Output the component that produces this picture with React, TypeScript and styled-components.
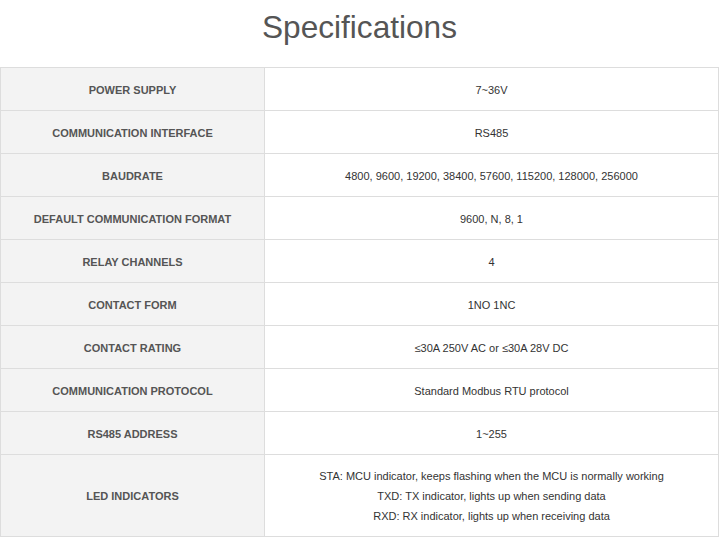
import React from "react";
import styled, { createGlobalStyle } from "styled-components";

const Global = createGlobalStyle`
  html, body { margin: 0; padding: 0; background: #fff; }
  body { font-family: "Liberation Sans", Arial, sans-serif; }
`;

const Page = styled.div`
  width: 719px;
`;

const Title = styled.h2`
  margin: 0;
  padding-top: 9px;
  height: 67px;
  box-sizing: border-box;
  font-size: 31.6px;
  line-height: 36px;
  font-weight: 400;
  color: #555;
  text-align: center;
`;

const Table = styled.table`
  width: 719px;
  border-collapse: collapse;
  table-layout: fixed;
`;

const Label = styled.th<{ $multi?: boolean }>`
  width: 264px;
  box-sizing: border-box;
  background: #f3f3f3;
  border: 1px solid #ddd;
  padding: ${(p) => (p.$multi ? "10px 8px" : "12px 8px 10px")};
  font-size: 11px;
  font-weight: 700;
  color: #555;
  text-transform: uppercase;
  text-align: center;
  vertical-align: middle;
`;

const Value = styled.td<{ $multi?: boolean }>`
  border: 1px solid #ddd;
  padding: ${(p) => (p.$multi ? "11px 8px 10px" : "12px 8px 10px")};
  font-size: 11px;
  color: #333;
  text-align: center;
  vertical-align: middle;
`;

const Line = styled.div`
  height: 20px;
  line-height: 20px;
  overflow: hidden;
  white-space: nowrap;
`;

const rows: [string, string[]][] = [
  ["Power Supply", ["7~36V"]],
  ["Communication Interface", ["RS485"]],
  ["Baudrate", ["4800, 9600, 19200, 38400, 57600, 115200, 128000, 256000"]],
  ["Default Communication Format", ["9600, N, 8, 1"]],
  ["Relay Channels", ["4"]],
  ["Contact Form", ["1NO 1NC"]],
  ["Contact Rating", ["≤30A 250V AC or ≤30A 28V DC"]],
  ["Communication Protocol", ["Standard Modbus RTU protocol"]],
  ["RS485 Address", ["1~255"]],
  [
    "LED Indicators",
    [
      "STA: MCU indicator, keeps flashing when the MCU is normally working",
      "TXD: TX indicator, lights up when sending data",
      "RXD: RX indicator, lights up when receiving data",
    ],
  ],
];

export default function App() {
  return (
    <Page>
      <Global />
      <Title>Specifications</Title>
      <Table>
        <tbody>
          {rows.map(([k, v]) => {
            const multi = v.length > 1;
            return (
              <tr key={k}>
                <Label $multi={multi}>
                  <Line>{k}</Line>
                </Label>
                <Value $multi={multi}>
                  {v.map((line, i) => (
                    <Line key={i}>{line}</Line>
                  ))}
                </Value>
              </tr>
            );
          })}
        </tbody>
      </Table>
    </Page>
  );
}
